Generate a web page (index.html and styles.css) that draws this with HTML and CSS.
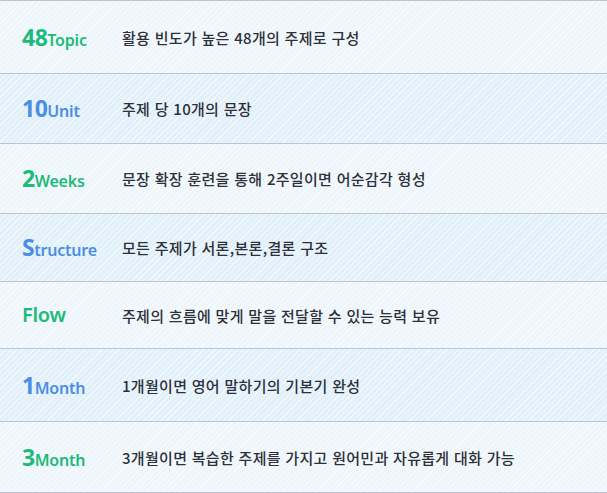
FILE: index.html
```html
<!DOCTYPE html>
<html lang="ko">
<head>
<meta charset="utf-8">
<link rel="stylesheet" href="styles.css">
</head>
<body>
<div class="list">
  <div class="row odd r1"><div class="label green"><span class="big">48</span><span class="small">Topic</span></div><div class="desc">활용 빈도가 높은 48개의 주제로 구성</div></div>
  <div class="row even r2"><div class="label blue"><span class="big">10</span><span class="small">Unit</span></div><div class="desc">주제 당 10개의 문장</div></div>
  <div class="row odd r3"><div class="label green"><span class="big">2</span><span class="small">Weeks</span></div><div class="desc">문장 확장 훈련을 통해 2주일이면 어순감각 형성</div></div>
  <div class="row even r4"><div class="label blue"><span class="big">S</span><span class="small">tructure</span></div><div class="desc">모든 주제가 서론,본론,결론 구조</div></div>
  <div class="row odd r5"><div class="label green"><span class="mid">Flow</span></div><div class="desc">주제의 흐름에 맞게 말을 전달할 수 있는 능력 보유</div></div>
  <div class="row even r6"><div class="label blue"><span class="big">1</span><span class="small">Month</span></div><div class="desc">1개월이면 영어 말하기의 기본기 완성</div></div>
  <div class="row odd r7"><div class="label green"><span class="big">3</span><span class="small">Month</span></div><div class="desc">3개월이면 복습한 주제를 가지고 원어민과 자유롭게 대화 가능</div></div>
</div>
</body>
</html>
```

FILE: styles.css
```css
html, body {
  margin: 0;
  padding: 0;
}
body {
  width: 607px;
  height: 493px;
  overflow: hidden;
  background: #eff6fb;
}
.list {
  border-top: 1px solid #bcc5d1;
}
.row {
  display: flex;
  align-items: center;
  border-bottom: 1px solid #bcc5d1;
  box-sizing: content-box;
}
.r1 { height: 72px; }
.r2 { height: 69px; }
.r3 { height: 69px; }
.r4 { height: 67px; }
.r5 { height: 66px; }
.r6 { height: 72px; }
.r7 { height: 70px; }
.odd {
  background-color: #eff6fb;
  background-image: repeating-linear-gradient(135deg, rgba(255,255,255,0.55) 0 1px, rgba(255,255,255,0) 1px 4px);
}
.even {
  background-color: #e2f0fa;
  background-image: repeating-linear-gradient(135deg, rgba(255,255,255,0.55) 0 1px, rgba(255,255,255,0) 1px 4px);
}
.label {
  width: 100px;
  padding-left: 22px;
  font-family: "Noto Sans", "Liberation Sans", sans-serif;
  white-space: nowrap;
  line-height: 1;
  display: flex;
  align-items: baseline;
}
.green { color: #1dba7b; }
.blue { color: #4b8ee6; }
.big {
  font-size: 23px;
  font-weight: 700;
  letter-spacing: -0.5px;
}
.small {
  font-size: 16px;
  font-weight: 600;
  letter-spacing: -0.2px;
}
.mid {
  font-size: 20px;
  font-weight: 600;
  letter-spacing: -0.3px;
}
.desc {
  font-family: "Noto Sans CJK KR", "Noto Sans", sans-serif;
  font-size: 15px;
  font-weight: 500;
  color: #2c303a;
  letter-spacing: 0.3px;
}
```
